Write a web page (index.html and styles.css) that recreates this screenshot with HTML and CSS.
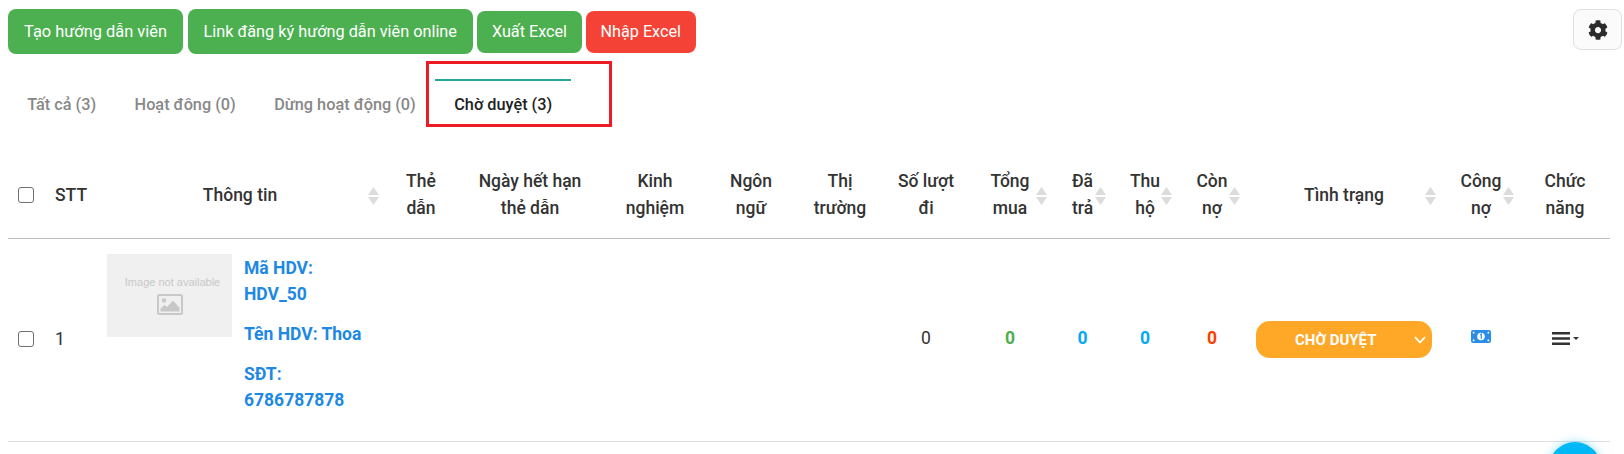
FILE: index.html
```html
<!DOCTYPE html>
<html lang="vi">
<head>
<meta charset="utf-8">
<title>Hướng dẫn viên</title>
<link rel="stylesheet" href="styles.css">
</head>
<body>
<div class="toolbar">
  <a class="btn btn-big btn-green">Tạo hướng dẫn viên</a>
  <a class="btn btn-big btn-link btn-green">Link đăng ký hướng dẫn viên online</a>
  <a class="btn btn-excel btn-green">Xuất Excel</a>
  <a class="btn btn-excel btn-red">Nhập Excel</a>
  <button class="gear-btn" aria-label="Cài đặt">
    <svg class="gear" viewBox="0 0 512 512"><path d="M487.4 315.7l-42.6-24.6c4.3-23.2 4.3-47 0-70.2l42.6-24.6c4.9-2.8 7.1-8.6 5.5-14-11.1-35.6-30-67.8-54.7-94.6-3.8-4.1-10-5.1-14.8-2.3L380.8 110c-17.9-15.4-38.5-27.3-60.8-35.1V25.8c0-5.6-3.9-10.5-9.4-11.7-36.7-8.2-74.3-7.8-109.2 0-5.5 1.2-9.4 6.1-9.4 11.7V75c-22.2 7.9-42.8 19.8-60.8 35.1L88.7 85.5c-4.9-2.8-11-1.9-14.8 2.3-24.7 26.7-43.6 58.9-54.7 94.6-1.7 5.4.6 11.2 5.5 14L67.3 221c-4.3 23.2-4.3 47 0 70.2l-42.6 24.6c-4.9 2.8-7.1 8.6-5.5 14 11.1 35.6 30 67.8 54.7 94.6 3.8 4.1 10 5.1 14.8 2.3l42.6-24.6c17.9 15.4 38.5 27.3 60.8 35.1v49.2c0 5.6 3.9 10.5 9.4 11.7 36.7 8.2 74.3 7.8 109.2 0 5.5-1.2 9.4-6.1 9.4-11.7v-49.2c22.2-7.9 42.8-19.8 60.8-35.1l42.6 24.6c4.9 2.8 11 1.9 14.8-2.3 24.7-26.7 43.6-58.9 54.7-94.6 1.5-5.5-.7-11.3-5.6-14.1zM256 336c-44.1 0-80-35.9-80-80s35.9-80 80-80 80 35.9 80 80-35.9 80-80 80z"/></svg>
  </button>
</div>

<ul class="tabs">
  <li class="tab">Tất cả (3)</li>
  <li class="tab">Hoạt đông (0)</li>
  <li class="tab">Dừng hoạt động (0)</li>
  <li class="tab tab-active">Chờ duyệt (3)</li>
</ul>
<div class="annotation"></div>

<table class="grid">
  <colgroup>
    <col class="c-check"><col class="c-stt"><col class="c-info"><col class="c-card"><col class="c-expiry"><col class="c-exp"><col class="c-lang"><col class="c-market"><col class="c-trips"><col class="c-buy"><col class="c-paid"><col class="c-collect"><col class="c-debt"><col class="c-status"><col class="c-ledger"><col class="c-action">
  </colgroup>
  <thead>
    <tr>
      <th class="cell-check"><input class="check" type="checkbox"></th>
      <th class="cell-stt">STT</th>
      <th class="sortable">Thông tin<svg class="sort" viewBox="0 0 11 18"><path d="M5.5 0 11 8H0zM5.5 18 0 10h11z"/></svg></th>
      <th>Thẻ<br>dẫn</th>
      <th>Ngày hết hạn<br>thẻ dẫn</th>
      <th>Kinh<br>nghiệm</th>
      <th>Ngôn<br>ngữ</th>
      <th>Thị<br>trường</th>
      <th>Số lượt<br>đi</th>
      <th class="sortable">Tổng<br>mua<svg class="sort" viewBox="0 0 11 18"><path d="M5.5 0 11 8H0zM5.5 18 0 10h11z"/></svg></th>
      <th class="sortable">Đã<br>trả<svg class="sort" viewBox="0 0 11 18"><path d="M5.5 0 11 8H0zM5.5 18 0 10h11z"/></svg></th>
      <th class="sortable">Thu<br>hộ<svg class="sort" viewBox="0 0 11 18"><path d="M5.5 0 11 8H0zM5.5 18 0 10h11z"/></svg></th>
      <th class="sortable">Còn<br>nợ<svg class="sort" viewBox="0 0 11 18"><path d="M5.5 0 11 8H0zM5.5 18 0 10h11z"/></svg></th>
      <th class="sortable">Tình trạng<svg class="sort" viewBox="0 0 11 18"><path d="M5.5 0 11 8H0zM5.5 18 0 10h11z"/></svg></th>
      <th class="sortable">Công<br>nợ<svg class="sort" viewBox="0 0 11 18"><path d="M5.5 0 11 8H0zM5.5 18 0 10h11z"/></svg></th>
      <th>Chức<br>năng</th>
    </tr>
  </thead>
  <tbody>
    <tr>
      <td class="cell-check"><input class="check" type="checkbox"></td>
      <td class="cell-stt">1</td>
      <td class="cell-info">
        <div class="info">
          <div class="noimage">
            <span class="noimage-text">Image not available</span>
            <svg class="noimage-icon" viewBox="0 0 26 21"><rect x="1" y="1" width="24" height="19" rx="1.5" fill="none" stroke="#c8c8c8" stroke-width="2"/><circle cx="7" cy="6.5" r="2.3" fill="#c8c8c8"/><path d="M3.5 17.5v-3l4-3.5 2.5 2 6-6.5 6.5 7v4z" fill="#c8c8c8"/></svg>
          </div>
          <div class="details">
            <p>Mã HDV: HDV_50</p>
            <p>Tên HDV: Thoa</p>
            <p>SĐT: 6786787878</p>
          </div>
        </div>
      </td>
      <td></td><td></td><td></td><td></td><td></td>
      <td class="num">0</td>
      <td class="num strong green">0</td>
      <td class="num strong blue">0</td>
      <td class="num strong blue">0</td>
      <td class="num strong red">0</td>
      <td class="cell-status">
        <div class="status"><span>CHỜ DUYỆT</span>
          <svg class="chevron" viewBox="0 0 12 8"><path d="M1 1.2 6 6.4l5-5.2" fill="none" stroke="#fff" stroke-width="1.7"/></svg>
        </div>
      </td>
      <td class="cell-icon">
        <svg class="money" viewBox="0 0 20 13"><rect width="20" height="13" rx="2" fill="#2a8ee8"/><circle cx="10" cy="6.5" r="3.8" fill="#fff"/><path d="M9.2 4.9 10.3 4.2v4.6" fill="none" stroke="#2a8ee8" stroke-width="1.2"/><path d="M1.8 1.8h1.6v1.6H1.8zM16.6 1.8h1.6v1.6h-1.6zM1.8 9.6h1.6v1.6H1.8zM16.6 9.6h1.6v1.6h-1.6z" fill="#fff"/></svg>
      </td>
      <td class="cell-icon">
        <div class="menu">
          <svg class="bars" viewBox="0 0 18 13"><path d="M0 0h18v2.6H0zM0 5.2h18v2.6H0zM0 10.4h18V13H0z"/></svg>
          <svg class="caret" viewBox="0 0 6 3"><path d="M0 0h6L3 3z"/></svg>
        </div>
      </td>
    </tr>
  </tbody>
</table>
<div class="fab"></div>
</body>
</html>
```
FILE: styles.css
```css
* { box-sizing: border-box; }
html, body { margin: 0; height: 100%; overflow: hidden; background: #fff; }
body { position: relative; font-family: Roboto, "Liberation Sans", sans-serif; color: #333; font-size: 17.5px; }

.toolbar { display: flex; align-items: center; gap: 4.5px; height: 45px; margin: 9px 2px 0 8px; }
.btn { display: flex; align-items: center; height: 42px; border-radius: 8px; color: #fff; font-size: 16.2px; }
.btn-big { height: 45px; padding: 0 16px; font-size: 16.4px; }
.btn-link { font-size: 16.27px; }
.btn-excel { padding: 0 14.5px; }
.btn-green { background: #4caf50; }
.btn-red { background: #f44336; }
.gear-btn { display: flex; align-items: center; justify-content: center; width: 49px; height: 41px; margin: 0 0 4px auto; padding: 0; background: #fbfbfb; border: 1px solid #e0e0e0; border-radius: 8px; }
.gear { width: 20px; height: 20px; fill: #2b2b2b; }

.tabs { display: flex; list-style: none; height: 50px; margin: 25px 0 22px 8px; padding: 0; }
.tab { padding: 0 19.2px; border-top: 2px solid transparent; line-height: 48px; font-size: 16.3px; font-weight: 500; color: #888; }
.tab-active { border-top-color: #26a69a; color: #222; }
.annotation { position: absolute; left: 426px; top: 61px; width: 186px; height: 66px; border: 3px solid #ed1c24; }

.grid { width: 1602px; margin-left: 8px; border-collapse: collapse; table-layout: fixed; }
.c-check { width: 36px; } .c-stt { width: 51px; } .c-info { width: 290px; } .c-card { width: 72px; }
.c-expiry { width: 146px; } .c-exp { width: 104px; } .c-lang { width: 88px; } .c-market { width: 90px; }
.c-trips { width: 82px; } .c-buy { width: 86px; } .c-paid { width: 59px; } .c-collect { width: 66px; }
.c-debt { width: 68px; } .c-status { width: 196px; } .c-ledger { width: 78px; } .c-action { width: 90px; }

th { position: relative; padding: 16px 0 14px; height: 87px; border-bottom: 1px solid #bdbdbd; font-size: 17.5px; font-weight: 500; line-height: 27px; text-align: center; color: #333; }
th.cell-stt, td.cell-stt { padding-left: 11px; text-align: left; }
th.cell-check, td.cell-check { padding-left: 10px; text-align: left; }
td.cell-check, td.cell-stt { padding-bottom: 2px; }
.check { appearance: none; display: block; width: 16px; height: 16px; margin: 0; border: 1.5px solid #6f6f6f; border-radius: 3px; background: #fff; }
.sort { position: absolute; right: 6px; top: 36px; width: 11px; height: 18px; fill: #dcdcdc; }

td { padding: 0; border-bottom: 1px solid #e0e0e0; text-align: center; vertical-align: middle; }
td.cell-info { padding: 16px 12px 14px; text-align: left; }
.info { display: flex; gap: 12px; align-items: flex-start; }
.noimage { flex: none; display: flex; flex-direction: column; align-items: center; width: 125px; height: 83px; margin-top: -1px; padding: 21px 0 0 6px; background: #f0f0f0; }
.noimage-text { font-family: "Liberation Sans", Arial, sans-serif; font-size: 11px; line-height: 14px; color: #c8c8c8; }
.noimage-icon { width: 26px; height: 21px; margin: 5px 0 0 -6px; }
.details { flex: 1; font-weight: 700; font-size: 17.5px; line-height: 26px; color: #1e88e5; }
.details p { margin: 0 0 14px; }

.num { color: #333; padding-bottom: 3px; }
.strong { font-weight: 700; }
.green { color: #4caf50; }
.blue { color: #03a9f4; }
.red { color: #ff3d00; }

.status { display: flex; align-items: center; justify-content: space-between; width: 176px; height: 37px; margin: 0 auto; padding: 0 6px 0 39px; border-radius: 14px; background: #ffa726; color: #fff; font-size: 15px; font-weight: 700; }
.chevron { width: 12px; height: 8px; }
.money { display: block; width: 20px; height: 13px; margin: 0 auto 6px; }
.menu { display: flex; align-items: center; justify-content: center; gap: 3px; padding-bottom: 2px; }
.bars { width: 18px; height: 13px; fill: #333; }
.caret { width: 6px; height: 3px; fill: #333; }

.fab { position: absolute; left: 1549px; top: 442px; width: 52px; height: 52px; border-radius: 50%; background: #00b8f5; box-shadow: 0 0 10px rgba(0, 184, 245, .45); }
```
